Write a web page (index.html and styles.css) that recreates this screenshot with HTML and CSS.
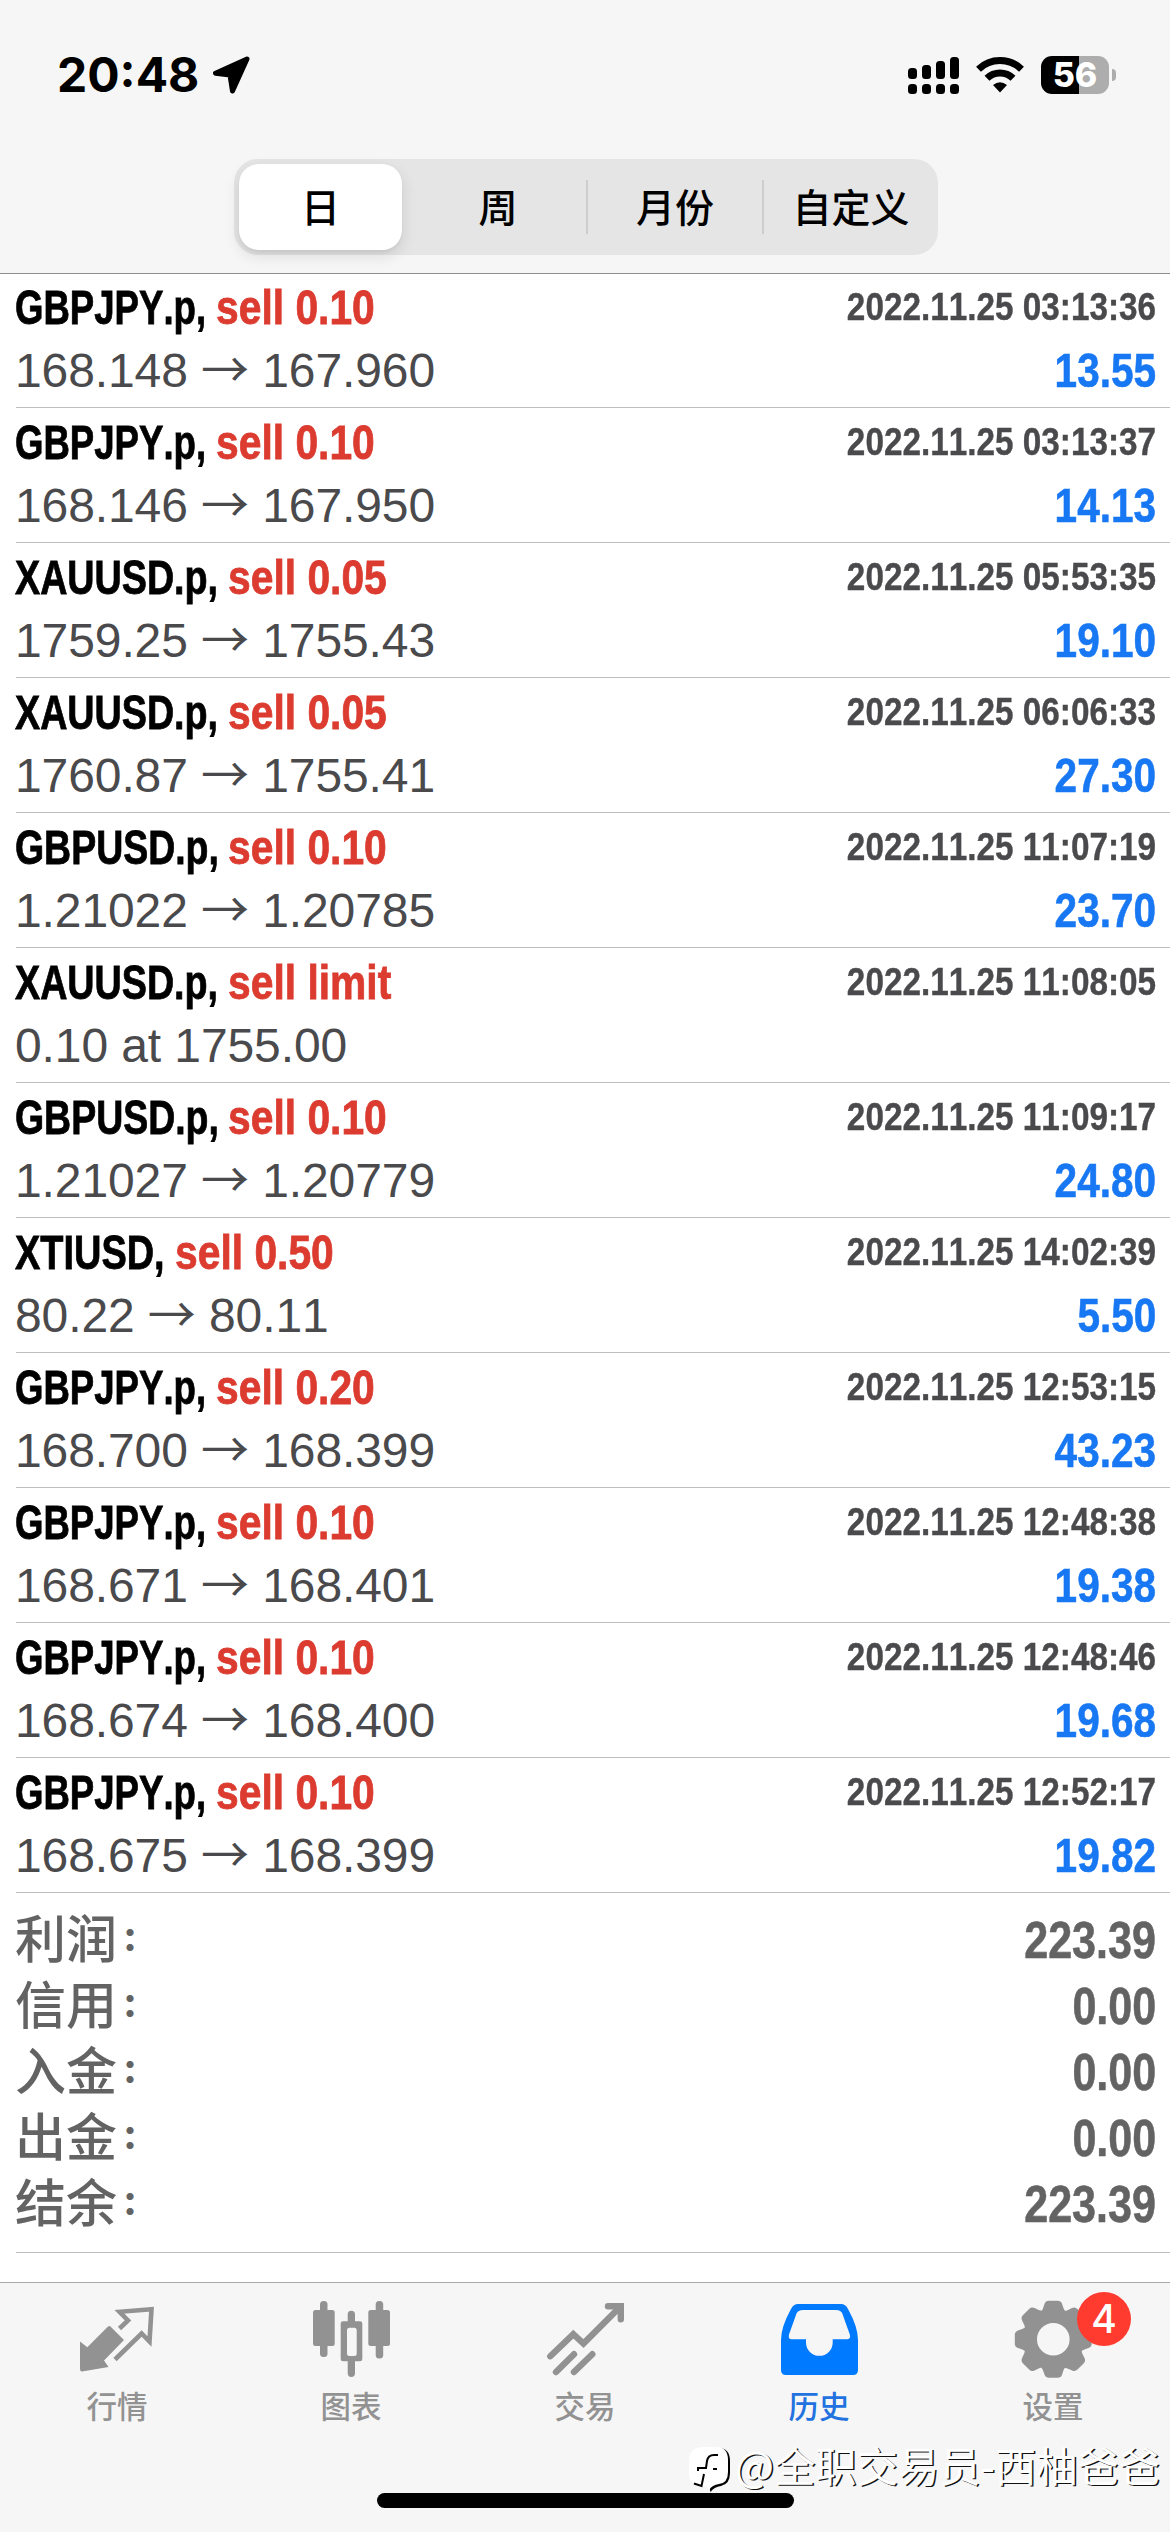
FILE: index.html
```html
<!DOCTYPE html>
<html lang="zh-CN">
<head>
<meta charset="utf-8">
<title>历史</title>
<link rel="stylesheet" href="styles.css">
</head>
<body>
<div class="screen">
  <header class="header">
    <div class="status">
      <div class="status-left">
        <span class="clock">20:48</span>
        <svg class="location" width="38" height="38" viewBox="0 0 38 38"><path d="M35 3 L3.5 17.2 L18 19 L20.5 35 Z" fill="#000" stroke="#000" stroke-width="5" stroke-linejoin="round"/></svg>
      </div>
      <div class="status-right">
        <svg width="51" height="38" viewBox="0 0 51 38"><rect x="0" y="12" width="9" height="11" rx="3.5"/><rect x="14" y="9" width="9" height="14" rx="3.5"/><rect x="28" y="5" width="9" height="18" rx="3.5"/><rect x="42" y="1" width="9" height="22" rx="3.5"/><rect x="0" y="28" width="9" height="10" rx="3.5"/><rect x="14" y="28" width="9" height="10" rx="3.5"/><rect x="28" y="28" width="9" height="10" rx="3.5"/><rect x="42" y="28" width="9" height="10" rx="3.5"/></svg>
        <svg class="wifi" width="48" height="38" viewBox="0 0 48 38"><g fill="none" stroke="#000" stroke-width="7"><path d="M2.5 13.2 A31 31 0 0 1 45.5 13.2"/><path d="M11 22.3 A18.6 18.6 0 0 1 37 22.3"/></g><path d="M17 29 Q24 23.3 31 29 L24 36.5 Z"/></svg>
        <div class="battery"><span class="battery-body">56</span><span class="battery-tip"></span></div>
      </div>
    </div>
    <nav class="segments">
      <span class="segment segment-on">日</span>
      <span class="segment">周</span>
      <span class="segment divided">月份</span>
      <span class="segment divided">自定义</span>
    </nav>
  </header>

  <main class="history">
    <div class="deal"><div class="title"><b class="symbol gbpjpy">GBPJPY.p,</b><b class="side">sell 0.10</b></div><time class="time">2022.11.25 03:13:36</time><div class="price">168.148 <i>→</i> 167.960</div><b class="profit">13.55</b></div>
    <div class="deal"><div class="title"><b class="symbol gbpjpy">GBPJPY.p,</b><b class="side">sell 0.10</b></div><time class="time">2022.11.25 03:13:37</time><div class="price">168.146 <i>→</i> 167.950</div><b class="profit">14.13</b></div>
    <div class="deal"><div class="title"><b class="symbol xauusd">XAUUSD.p,</b><b class="side">sell 0.05</b></div><time class="time">2022.11.25 05:53:35</time><div class="price">1759.25 <i>→</i> 1755.43</div><b class="profit">19.10</b></div>
    <div class="deal"><div class="title"><b class="symbol xauusd">XAUUSD.p,</b><b class="side">sell 0.05</b></div><time class="time">2022.11.25 06:06:33</time><div class="price">1760.87 <i>→</i> 1755.41</div><b class="profit">27.30</b></div>
    <div class="deal"><div class="title"><b class="symbol gbpusd">GBPUSD.p,</b><b class="side">sell 0.10</b></div><time class="time">2022.11.25 11:07:19</time><div class="price">1.21022 <i>→</i> 1.20785</div><b class="profit">23.70</b></div>
    <div class="deal"><div class="title"><b class="symbol xauusd">XAUUSD.p,</b><b class="side">sell limit</b></div><time class="time">2022.11.25 11:08:05</time><div class="price">0.10 at 1755.00</div></div>
    <div class="deal"><div class="title"><b class="symbol gbpusd">GBPUSD.p,</b><b class="side">sell 0.10</b></div><time class="time">2022.11.25 11:09:17</time><div class="price">1.21027 <i>→</i> 1.20779</div><b class="profit">24.80</b></div>
    <div class="deal"><div class="title"><b class="symbol xtiusd">XTIUSD,</b><b class="side">sell 0.50</b></div><time class="time">2022.11.25 14:02:39</time><div class="price">80.22 <i>→</i> 80.11</div><b class="profit">5.50</b></div>
    <div class="deal"><div class="title"><b class="symbol gbpjpy">GBPJPY.p,</b><b class="side">sell 0.20</b></div><time class="time">2022.11.25 12:53:15</time><div class="price">168.700 <i>→</i> 168.399</div><b class="profit">43.23</b></div>
    <div class="deal"><div class="title"><b class="symbol gbpjpy">GBPJPY.p,</b><b class="side">sell 0.10</b></div><time class="time">2022.11.25 12:48:38</time><div class="price">168.671 <i>→</i> 168.401</div><b class="profit">19.38</b></div>
    <div class="deal"><div class="title"><b class="symbol gbpjpy">GBPJPY.p,</b><b class="side">sell 0.10</b></div><time class="time">2022.11.25 12:48:46</time><div class="price">168.674 <i>→</i> 168.400</div><b class="profit">19.68</b></div>
    <div class="deal"><div class="title"><b class="symbol gbpjpy">GBPJPY.p,</b><b class="side">sell 0.10</b></div><time class="time">2022.11.25 12:52:17</time><div class="price">168.675 <i>→</i> 168.399</div><b class="profit">19.82</b></div>
    <section class="summary">
      <div class="total"><span class="label">利润<em>:</em></span><b class="amount">223.39</b></div>
      <div class="total"><span class="label">信用<em>:</em></span><b class="amount">0.00</b></div>
      <div class="total"><span class="label">入金<em>:</em></span><b class="amount">0.00</b></div>
      <div class="total"><span class="label">出金<em>:</em></span><b class="amount">0.00</b></div>
      <div class="total"><span class="label">结余<em>:</em></span><b class="amount">223.39</b></div>
    </section>
  </main>

  <footer class="tabs">
    <div class="tab">
      <svg width="78" height="78" viewBox="0 0 78 78"><path d="M32 26 L46 40 L26 60.5 L30.5 67 L4 71.6 Q2 71.6 2 69 V41.6 L9.3 47.3 L30 26.5 Z" fill="#929292"/><path d="M41.5 28.5 L50 20.5 L41.5 11.8 L73.5 9.2 L71.5 41.5 L63.6 33.5 L37 59.5" fill="none" stroke="#929292" stroke-width="4.6" stroke-linejoin="miter"/></svg>
      <span>行情</span>
    </div>
    <div class="tab">
      <svg width="78" height="78" viewBox="0 0 78 78" fill="#929292"><rect x="8" y="1" width="7.5" height="56" rx="3.5"/><rect x="1" y="10" width="21.7" height="36" rx="2.5"/><rect x="63.7" y="1" width="7.5" height="57.5" rx="3.5"/><rect x="56.3" y="10" width="21.7" height="36" rx="2.5"/><path d="M35.7 21.3 V14.5 A3.6 3.6 0 0 1 43 14.5 V21.3 H48 Q50.3 21.3 50.3 23.6 V59 Q50.3 61.3 48 61.3 H43 V73.3 A3.6 3.6 0 0 1 35.7 73.3 V61.3 H31 Q28.7 61.3 28.7 59 V23.6 Q28.7 21.3 31 21.3 Z M37.5 27.7 Q35 27.7 35 30.2 V53.5 Q35 56 37.5 56 H42.2 Q44.7 56 44.7 53.5 V30.2 Q44.7 27.7 42.2 27.7 Z" fill-rule="evenodd"/></svg>
      <span>图表</span>
    </div>
    <div class="tab">
      <svg width="78" height="78" viewBox="0 0 78 78" fill="none" stroke="#929292" stroke-width="6.4" stroke-linecap="round"><path d="M4.3 56.2 L27.3 34.2 L37.5 43.6 L73 8"/><path d="M62 6.2 H74.8 V19.3"/><path d="M10 72 L28 54.2 M28 72 L46.3 54.2"/></svg>
      <span>交易</span>
    </div>
    <div class="tab tab-on">
      <svg width="78" height="78" viewBox="0 0 78 78"><path d="M20 4 H61 Q65.500 4 68 9 Q78 27 78 40 V70 Q78 75 73 75 H6 Q1 75 1 70 V40 Q1 27 11 9 Q13.500 4 18 4 Z M23 10 Q18 10 16.500 13.500 L9 34.500 Q8 39.300 11.500 39.300 H26 V42.500 A13.350 13.350 0 0 0 52.700 42.500 V39.300 H67 Q71 39.300 69.800 34.500 L62.300 13.500 Q61 10 56 10 Z" fill="#007aff" fill-rule="evenodd"/></svg>
      <span>历史</span>
    </div>
    <div class="tab">
      <svg width="78" height="78" viewBox="0 0 78 78"><defs><path id="tooth" d="M24 14 C29 11 29 8 30.500 4 Q31.500 .8 35 .8 H43.600 Q47 .8 48.100 4 C49.500 8 50 11 54.600 14 L39.300 30 Z"/></defs><mask id="hub"><rect width="78" height="78" fill="#fff"/><circle cx="39.300" cy="39.300" r="16.300" fill="#000"/></mask><g fill="#929292" mask="url(#hub)"><circle cx="39.300" cy="39.300" r="29.500"/><use href="#tooth"/><use href="#tooth" transform="rotate(45 39.300 39.300)"/><use href="#tooth" transform="rotate(90 39.300 39.300)"/><use href="#tooth" transform="rotate(135 39.300 39.300)"/><use href="#tooth" transform="rotate(180 39.300 39.300)"/><use href="#tooth" transform="rotate(225 39.300 39.300)"/><use href="#tooth" transform="rotate(270 39.300 39.300)"/><use href="#tooth" transform="rotate(315 39.300 39.300)"/></g></svg>
      <span>设置</span>
      <b class="badge">4</b>
    </div>
  </footer>
  <div class="home-bar"></div>
  <div class="watermark">
    <svg width="44" height="48" viewBox="0 0 44 48"><path d="M16 2 H29 Q41 2 41 15 V27 Q41 38 32 40 Q25 41 21.500 46 Q21 40 15 39 Q2 39 2 28 V15 Q2 2 16 2Z" fill="#000"/><path d="M15 1 H27 Q39 1 39 14 V26 Q39 37 30 38 Q23 39 20 44 Q19 40 14 40 Q0 39 0 27 V14 Q0 1 15 1Z" fill="#fff"/><path d="M29 9 H25 Q19 9 18 15 L17 22 H9 V25 M24 23 H28 M15 28 L12.500 40 L5 37.500" fill="none" stroke="#000" stroke-width="2"/></svg>
    <span>@全职交易员-西柚爸爸</span>
  </div>
</div>
</body>
</html>
```
FILE: styles.css
```css
* { box-sizing: border-box; }
body { margin: 0; background: #fff; }
.screen {
  position: relative;
  display: flex;
  flex-direction: column;
  width: 1170px;
  height: 2532px;
  overflow: hidden;
  background: #fff;
  font-family: "Liberation Sans", "Noto Sans CJK SC", sans-serif;
  white-space: nowrap;
}
svg { display: block; flex: none; }

.header {
  height: 274px;
  flex: none;
  background: #f6f6f6;
  border-bottom: 1px solid #8e8e90;
}
.status {
  display: flex;
  justify-content: space-between;
  align-items: center;
  height: 159px;
  padding: 0 54px 10px 57px;
}
.status-left, .status-right { display: flex; align-items: center; }
.status-left { gap: 13px; }
.status-right { gap: 17px; }
.clock { font: 700 48px/60px Inter, sans-serif; }
.battery { display: flex; align-items: center; gap: 3px; }
.battery-body {
  width: 68px;
  height: 38px;
  border-radius: 11px;
  background: linear-gradient(90deg, #000 38px, #adadad 38px);
  color: #fff;
  font: 800 34px/38px Inter, sans-serif;
  text-align: center;
}
.battery-tip { width: 4px; height: 12px; border-radius: 0 5px 5px 0; background: #adadad; }

.segments {
  display: grid;
  grid-template-columns: repeat(4, 1fr);
  width: 704px;
  height: 96px;
  margin-left: 234px;
  padding: 5px 0;
  border-radius: 24px;
  background: #e5e5e6;
}
.segment {
  display: flex;
  align-items: center;
  justify-content: center;
  padding-bottom: 5px;
  font: 500 39px/58px "Noto Sans CJK SC", sans-serif;
}
.segment-on {
  margin: 0 8px 0 5px;
  border-radius: 20px;
  background: #fff;
  box-shadow: 0 6px 16px rgba(0, 0, 0, .11), 0 3px 3px rgba(0, 0, 0, .04);
}
.divided { padding-left: 2px; background: linear-gradient(#cdcdd0, #cdcdd0) 0 50% / 2px 54px no-repeat; }

.history { flex: none; height: 2008px; padding-left: 16px; }
.deal {
  display: grid;
  grid-template-columns: 1fr auto;
  grid-template-rows: 63px 63px;
  height: 135px;
  padding: 3px 14px 0 0;
  border-bottom: 1px solid #bebec0;
  font-size: 48px;
  line-height: 63px;
  font-kerning: none;
}
.deal:first-child { height: 134px; padding-top: 2px; }
.title { display: flex; margin-left: -1px; }
.symbol, .side { transform-origin: 0 50%; -webkit-text-stroke: .8px; }
.symbol { color: #000; }
.gbpjpy { width: 201px; transform: scaleX(.762); }
.xauusd { width: 213px; transform: scaleX(.785); }
.gbpusd { width: 213px; transform: scaleX(.78); }
.xtiusd { width: 160px; transform: scaleX(.79); }
.side { color: #dc3b30; transform: scaleX(.85); }
.time {
  justify-self: end;
  margin-top: -1px;
  color: #4a4a4d;
  font-size: 39px;
  font-weight: 700;
  transform: scaleX(.854);
  transform-origin: 100% 50%;
  -webkit-text-stroke: .4px;
}
.price { margin-left: -1px; color: #4a4a4d; letter-spacing: -.1px; }
.price i { font: normal 48px/1 "Noto Sans CJK SC", sans-serif; }
.profit, .amount { transform: scaleX(.845); transform-origin: 100% 50%; -webkit-text-stroke: .6px; }
.profit { justify-self: end; color: #1877f2; }

.summary {
  height: 360px;
  padding: 15px 14px 0 0;
  border-bottom: 1px solid #bebec0;
  color: #636363;
}
.total { display: flex; justify-content: space-between; align-items: center; height: 66px; }
.label {
  margin-left: -1px;
  font: 500 51px/66px "Liberation Sans", "Noto Sans CJK SC", sans-serif;
}
.label em {
  display: inline-block;
  margin-left: 6px;
  font: normal 700 42px/50px Inter, sans-serif;
  transform: translateY(-7px);
}
.amount { font-size: 51px; line-height: 66px; }

.tabs {
  display: grid;
  grid-template-columns: repeat(5, 234px);
  flex: 1;
  border-top: 1px solid #a9a9ab;
  background: #f6f6f6;
}
.tab {
  position: relative;
  display: flex;
  flex-direction: column;
  align-items: center;
  padding-top: 17px;
  color: #929292;
  font: 500 30.5px/44px "Noto Sans CJK SC", sans-serif;
}
.tab span { margin-top: 5px; }
.tab-on { color: #2272e0; }
.badge {
  position: absolute;
  left: 141px;
  top: 9px;
  width: 54px;
  height: 54px;
  border-radius: 50%;
  background: #ff3b30;
  color: #fff;
  font: 500 39px/54px Inter, sans-serif;
  text-align: center;
}
.home-bar {
  position: absolute;
  left: 377px;
  top: 2493px;
  width: 417px;
  height: 15px;
  border-radius: 8px;
  background: #000;
}
.watermark {
  position: absolute;
  left: 689px;
  top: 2446px;
  display: flex;
  gap: 2px;
  color: #fff;
  font: 400 41.3px/37px "Noto Sans CJK SC", sans-serif;
  text-shadow: 1.5px 1px 0 #111;
}
```
